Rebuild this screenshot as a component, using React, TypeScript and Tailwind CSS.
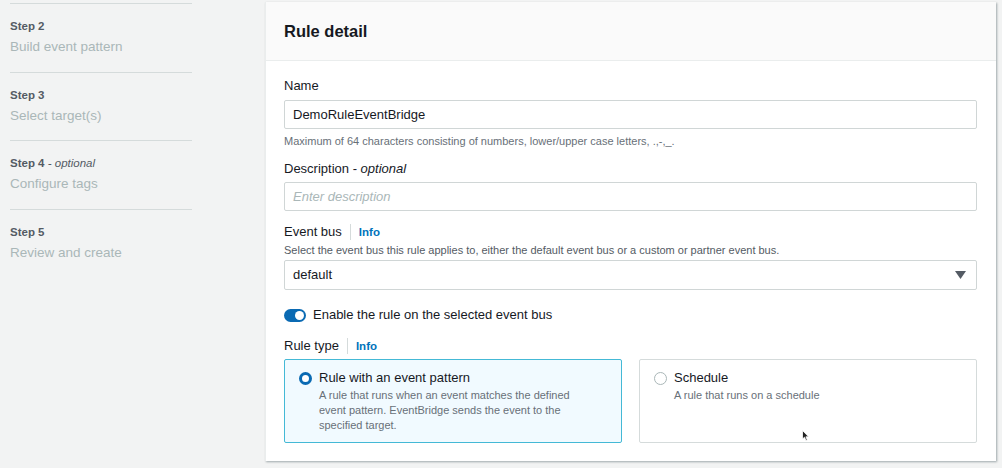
import React from "react";

const font = { fontFamily: '"Liberation Sans", Arial, sans-serif' };

function Step({ n, title, optional }: { n: string; title: string; optional?: boolean }) {
  return (
    <div className="border-t border-[#d5dbdb] h-[68.5px] pt-[14px]">
      <div className="text-[11.5px] font-bold text-[#545b64] leading-[16px]">
        {n}
        {optional && <span className="font-normal italic"> - optional</span>}
      </div>
      <div className="text-[13.5px] text-[#aab7b8] leading-[20px] mt-[3px]">{title}</div>
    </div>
  );
}

function Info() {
  return (
    <span className="inline-flex items-center">
      <span className="w-px h-[16px] bg-[#d5dbdb] mx-[8px]" />
      <span className="text-[11.5px] font-bold text-[#0073bb]">Info</span>
    </span>
  );
}

export default function App() {
  return (
    <div className="w-[1002px] h-[468px] bg-[#f2f3f3] flex overflow-hidden relative text-[#16191f]" style={font}>
      <div className="w-[182px] ml-[10px] pt-[3px] shrink-0">
        <Step n="Step 2" title="Build event pattern" />
        <Step n="Step 3" title="Select target(s)" />
        <Step n="Step 4" title="Configure tags" optional />
        <Step n="Step 5" title="Review and create" />
      </div>
      <div className="ml-[73px] mt-[2px] w-[731px] h-[459px] bg-white shadow-[1px_1px_2px_rgba(0,28,36,0.35)] border-l border-[#eaeded] flex flex-col">
        <div className="h-[59px] bg-[#fafafa] border-b border-[#eaeded] px-[18px] flex items-center">
          <h2 className="text-[16.5px] font-bold leading-[22px]">Rule detail</h2>
        </div>
        <div className="px-[18px] pt-[15px]">
          <div className="text-[13px] leading-[20px]">Name</div>
          <div className="mt-[4px] h-[29px] border border-[#d0d6d6] rounded-[2px] px-[8px] flex items-center text-[13px] w-[693px]">
            DemoRuleEventBridge
          </div>
          <div className="mt-[4px] text-[11px] text-[#687078] leading-[16px]">
            Maximum of 64 characters consisting of numbers, lower/upper case letters, .,-,_.
          </div>

          <div className="mt-[10px] text-[13px] leading-[20px]">
            Description - <span className="italic">optional</span>
          </div>
          <div className="mt-[3px] h-[29px] border border-[#d0d6d6] rounded-[2px] px-[8px] flex items-center text-[13px] italic text-[#aab7b8] w-[693px]">
            Enter description
          </div>

          <div className="mt-[11px] text-[13px] leading-[20px] flex items-center">
            Event bus
            <Info />
          </div>
          <div className="text-[11px] text-[#545b64] leading-[16px]">
            Select the event bus this rule applies to, either the default event bus or a custom or partner event bus.
          </div>
          <div className="mt-[2px] h-[30px] border border-[#d0d6d6] rounded-[2px] pl-[8px] pr-[10px] flex items-center justify-between text-[13px] w-[693px]">
            <span>default</span>
            <svg width="11" height="8" viewBox="0 0 11 8">
              <path d="M0 0 L11 0 L5.5 8 Z" fill="#545b64" />
            </svg>
          </div>

          <div className="mt-[15px] flex items-center text-[13px] leading-[20px]">
            <div className="w-[22px] h-[13px] rounded-full bg-[#0a6ab3] relative mr-[7px]">
              <div className="absolute right-[2px] top-[2px] w-[9px] h-[9px] rounded-full bg-white" />
            </div>
            Enable the rule on the selected event bus
          </div>

          <div className="mt-[11px] text-[13px] leading-[20px] flex items-center">
            Rule type
            <Info />
          </div>
          <div className="mt-[3px] flex gap-[17px] w-[693px]">
            <div className="w-[338px] h-[84px] border border-[#44b9d6] bg-[#f1faff] rounded-[2px] pl-[14px] pt-[8px] flex">
              <div className="w-[13px] h-[13px] rounded-full border-[3.5px] border-[#0a6ab3] bg-white mt-[3.5px] mr-[7px] shrink-0" />
              <div>
                <div className="text-[13px] leading-[20px]">Rule with an event pattern</div>
                <div className="text-[11px] text-[#687078] leading-[15px] w-[264px]">
                  A rule that runs when an event matches the defined event pattern. EventBridge sends the event to the specified target.
                </div>
              </div>
            </div>
            <div className="w-[338px] h-[84px] border border-[#d5dbdb] bg-white rounded-[2px] pl-[14px] pt-[8px] flex">
              <div className="w-[13px] h-[13px] rounded-full border border-[#aab7b8] bg-white mt-[3.5px] mr-[7px] shrink-0" />
              <div>
                <div className="text-[13px] leading-[20px]">Schedule</div>
                <div className="text-[11px] text-[#687078] leading-[15px]">A rule that runs on a schedule</div>
              </div>
            </div>
          </div>
        </div>
      </div>
      <svg className="absolute left-[802px] top-[430px]" width="8" height="12" viewBox="0 0 8 12">
        <path d="M0.5 0.5 L0.5 9 L2.5 7.2 L4 10.5 L5.3 10 L3.9 6.8 L6.6 6.8 Z" fill="#222" stroke="#fff" strokeWidth="0.8" />
      </svg>
    </div>
  );
}
